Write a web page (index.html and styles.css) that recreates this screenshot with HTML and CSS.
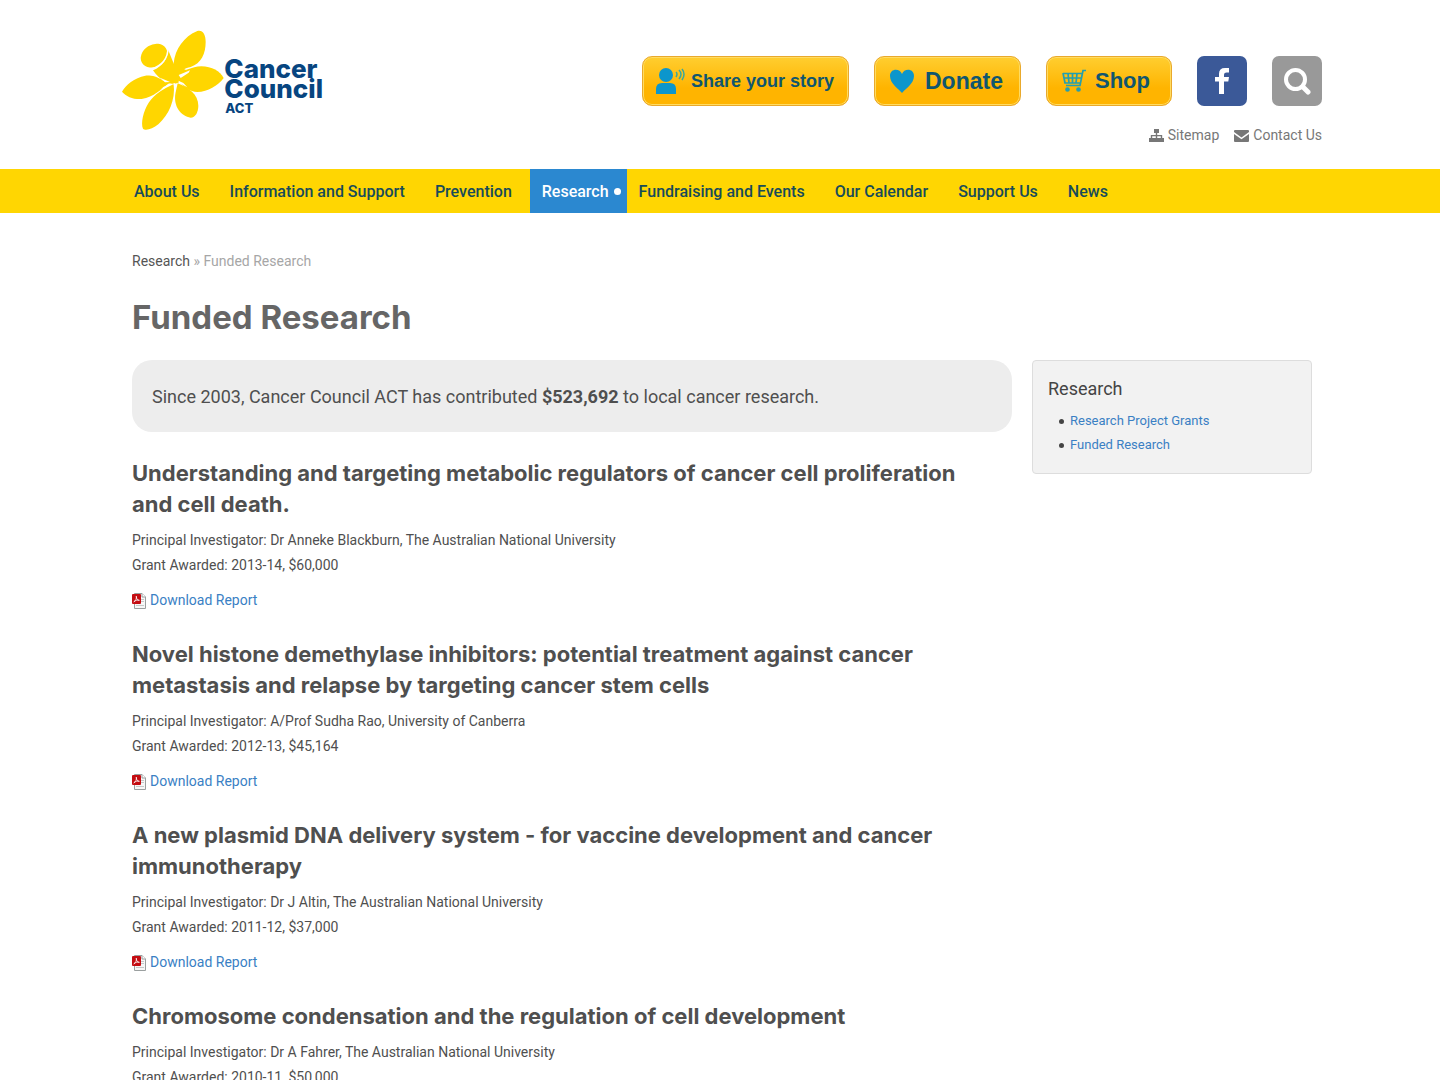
FILE: index.html
```html
<!DOCTYPE html>
<html lang="en">
<head>
<meta charset="utf-8">
<meta name="viewport" content="width=device-width, initial-scale=1">
<title>Funded Research - Cancer Council ACT</title>
<link rel="stylesheet" href="styles.css">
</head>
<body>
<svg width="0" height="0" class="sprite" aria-hidden="true">
  <symbol id="pdf" viewBox="0 0 14 16">
    <path d="M2.500.500h7.500l3.500 3.500v11.500h-11z" fill="#f7f7f7" stroke="#9a9f9f"/>
    <path d="M10 .500v3.500h3.500" fill="#fff" stroke="#9a9f9f"/>
    <path d="M9 6.500h3M9 8.500h3M4 12.500h8" stroke="#c4c8c8"/>
    <rect y="1" width="9" height="10" rx="1" fill="#c40d12"/>
    <path d="M1.800 8.800C3.800 7.800 4.700 5.500 4.300 3.200 4.300 6 5.500 7.300 7.400 7.300 5.500 6.800 3.500 7.300 1.800 8.800z" fill="none" stroke="#fff" stroke-width=".8"/>
  </symbol>
</svg>
<header class="wrap header">
  <a class="logo" href="#" aria-label="Cancer Council ACT">
    <svg width="204" height="102" viewBox="36 30 612 306">
      <g fill="#ffd600">
        <path d="M191 130C195 88 222 49 262 33C278 29 287 43 287 66C287 101 274 130 242 141C225 145 214 150 206 164L188 150Z"/>
        <path d="M205 174C220 150 244 141 274 139C306 139 330 154 341 174C323 198 294 215 262 216C239 215 222 202 206 182Z"/>
        <path d="M203 190C236 203 264 222 265 257C265 276 256 293 242 293C213 288 188 260 197 216Z"/>
        <path d="M191 192C197 240 176 285 145 313C128 326 107 334 99 326C92 311 99 274 117 247C135 220 160 208 191 192Z"/>
        <path d="M178 189C154 207 132 231 95 237C72 239 48 230 36 215C47 194 73 174 106 167C124 166 139 169 160 182Z"/>
        <path d="M129 151C158 138 175 116 173 86L192 133L236 154C223 160 216 172 207 187C193 194 173 193 164 184C151 178 139 165 129 151Z"/>
        <ellipse cx="132" cy="107" rx="42" ry="33" transform="rotate(-32 132 107)"/>
      </g>
      <path d="M121 149C153 139 175 116 174 82" fill="none" stroke="#fff" stroke-width="5"/>
      <path d="M206 165L240 151L236 158L212 174ZM205 182L220 189L232 202L208 189ZM190 190L195 190L197 218ZM184 190L150 211L160 201ZM150 173L166 180L180 186L165 187Z" fill="#fff"/>
      <g class="logo-text">
        <text x="343" y="173">Cancer</text>
        <text x="343" y="235">Council</text>
        <text class="logo-small" x="346" y="280">ACT</text>
      </g>
    </svg>
  </a>
  <div class="tools">
    <div class="buttons">
      <a class="cta share" href="#">
        <svg width="30" height="28" viewBox="0 0 30 28"><g fill="#0c96cc"><circle cx="10" cy="8" r="7"/><path d="M0 27v-5q0-6 6-6h8q6 0 6 6v5z"/></g><path d="M20 5q2 2 0 5M23 3q4 4 0 9M26 2q4 5 0 11" fill="none" stroke="#3ba89c" stroke-width="1.500"/></svg>
        Share your story</a>
      <a class="cta donate" href="#">
        <svg width="26" height="24" viewBox="0 0 26 24"><path d="M13 24C10 20 1 15 1 7C1-1 11-1 13 5C15-1 25-1 25 7C25 15 16 20 13 24z" fill="#0c96cc"/></svg>
        Donate</a>
      <a class="cta shop" href="#">
        <svg width="24" height="24" viewBox="0 0 24 24" fill="none" stroke="#239fb0" stroke-width="1.700"><path d="M24 1.500h-3l-3 15H4M1 4.500h19M1 4l2 10h15.500M2 9h17M6 4.500l1 9.500M10.500 4.500v9.500M15 4.500l-1 9.500"/><g fill="#239fb0"><circle cx="5.500" cy="20.500" r="1.500"/><circle cx="16.500" cy="20.500" r="1.500"/></g></svg>
        Shop</a>
      <a class="square facebook" href="#" aria-label="Facebook"><svg width="16" height="28" viewBox="0 0 16 28"><path d="M15 1v4.500h-2.500q-2.500 0-2.500 2.300V10h5l-.700 4.500H10V27H5V14.500H1V10h4V6.800Q5 1 11 1z" fill="#fff"/></svg></a>
      <button class="square search" type="button" aria-label="Search"><svg width="28" height="28" viewBox="0 0 28 28" fill="none" stroke="#fff" stroke-width="4"><circle cx="12.500" cy="12.500" r="9.500"/><path d="M20 20l5 5" stroke-width="5" stroke-linecap="round"/></svg></button>
    </div>
    <div class="quick">
      <a href="#"><svg width="15" height="13" viewBox="0 0 15 13"><path d="M5 0h5v4H8.200v2H13.200v3H15v4h-5V9h1.800V7.300H8.200V9H10v4H5V9h1.800V7.300H3.200V9H5v4H0V9h1.800V6h5V4H5z" fill="#777"/></svg>Sitemap</a>
      <a href="#"><svg width="15" height="12" viewBox="0 0 15 12"><path d="M1 0h13q1 0 1 1v1L7.500 7.500 0 2V1q0-1 1-1zM0 4l7.500 5.300L15 4v7q0 1-1 1H1q-1 0-1-1z" fill="#777"/></svg>Contact Us</a>
    </div>
  </div>
</header>
<nav class="nav">
  <ul class="wrap">
    <li><a href="#">About Us</a></li>
    <li><a href="#">Information and Support</a></li>
    <li><a href="#">Prevention</a></li>
    <li><a class="active" href="#">Research</a></li>
    <li><a href="#">Fundraising and Events</a></li>
    <li><a href="#">Our Calendar</a></li>
    <li><a href="#">Support Us</a></li>
    <li><a href="#">News</a></li>
  </ul>
</nav>
<div class="wrap page">
  <div class="crumbs"><a href="#">Research</a> » Funded Research</div>
  <h1>Funded Research</h1>
  <div class="columns">
    <main>
      <p class="callout">Since 2003, Cancer Council ACT has contributed <strong>$523,692</strong> to local cancer research.</p>
      <article>
        <h2>Understanding and targeting metabolic regulators of cancer cell proliferation and cell death.</h2>
        <p>Principal Investigator: Dr Anneke Blackburn, The Australian National University<br>Grant Awarded: 2013-14, $60,000</p>
        <a class="report" href="#"><svg width="14" height="16"><use href="#pdf"/></svg>Download Report</a>
      </article>
      <article>
        <h2>Novel histone demethylase inhibitors: potential treatment against cancer metastasis and relapse by targeting cancer stem cells</h2>
        <p>Principal Investigator: A/Prof Sudha Rao, University of Canberra<br>Grant Awarded: 2012-13, $45,164</p>
        <a class="report" href="#"><svg width="14" height="16"><use href="#pdf"/></svg>Download Report</a>
      </article>
      <article>
        <h2>A new plasmid DNA delivery system - for vaccine development and cancer immunotherapy</h2>
        <p>Principal Investigator: Dr J Altin, The Australian National University<br>Grant Awarded: 2011-12, $37,000</p>
        <a class="report" href="#"><svg width="14" height="16"><use href="#pdf"/></svg>Download Report</a>
      </article>
      <article>
        <h2>Chromosome condensation and the regulation of cell development</h2>
        <p>Principal Investigator: Dr A Fahrer, The Australian National University<br>Grant Awarded: 2010-11, $50,000</p>
      </article>
    </main>
    <aside>
      <h3>Research</h3>
      <ul>
        <li><a href="#">Research Project Grants</a></li>
        <li><a href="#">Funded Research</a></li>
      </ul>
    </aside>
  </div>
</div>
</body>
</html>
```
FILE: styles.css
```css
* { box-sizing: border-box; }
body {
  margin: 0;
  background: #fff;
  color: #4f4f4f;
  font: 14px/25px Roboto, sans-serif;
}
a { color: #3a80c4; text-decoration: none; }
h1, h2, h3, p, ul { margin: 0; padding: 0; }
ul { list-style: none; }
svg { display: block; flex: none; }
.sprite { position: absolute; }
.wrap { max-width: 1204px; margin: 0 auto; padding-left: 4px; }

.header { display: flex; justify-content: space-between; padding-top: 30px; padding-bottom: 21px; }
.logo-text { fill: #074580; font: 800 78px Inter, sans-serif; }
.logo-small { font-size: 39px; }
.tools { padding-top: 26px; }
.buttons { display: flex; gap: 25px; }
.cta {
  display: flex;
  align-items: center;
  height: 50px;
  border: 1px solid #e9a92c;
  border-radius: 10px;
  background: linear-gradient(#ffce30, #ffb400 65%);
  box-shadow: inset 0 0 0 1px #ffdc62;
  color: #10566f;
  font: bold 23px "Liberation Sans", Arial, sans-serif;
}
.share { width: 207px; padding-left: 13px; gap: 5px; font-size: 18px; }
.donate { width: 147px; padding-left: 14px; gap: 10px; }
.shop { width: 126px; padding-left: 15px; gap: 9px; font-size: 22px; }
.square {
  display: flex;
  align-items: center;
  justify-content: center;
  width: 50px;
  height: 50px;
  padding: 0;
  border: 0;
  border-radius: 7px;
}
.facebook { background: #3b5998; }
.search { background: #999; }
.quick { display: flex; justify-content: flex-end; gap: 15px; padding-top: 17px; }
.quick a { display: flex; align-items: center; gap: 4px; color: #777; }

.nav { background: #ffd602; font-size: 16px; font-weight: 500; line-height: 42px; }
.nav ul { display: flex; }
.nav a { display: block; position: relative; padding: 2px 18px 0 12px; color: #174b5a; }
.nav .active { background: #2b88d0; color: #fff; }
.nav .active::after {
  content: "";
  position: absolute;
  right: 6px;
  top: 19px;
  width: 7px;
  height: 7px;
  border-radius: 50%;
  background: #fff;
}

.page { padding: 36px 10px 40px 14px; }
.crumbs { color: #a6a6a6; }
.crumbs a { color: #555; }
h1, h2 { font-family: Inter, Arial, sans-serif; }
h1 { margin: 23px 0; color: #666; font-size: 33px; line-height: 40px; }
.columns { display: grid; grid-template-columns: minmax(0, 1fr) 280px; gap: 20px; align-items: start; }
.callout {
  padding: 25px 20px 23px;
  border-radius: 20px;
  background: #ededed;
  font-size: 18px;
  line-height: 24px;
}
article { margin-top: 26px; }
h2 { margin-bottom: 8px; padding-right: 20px; color: #4f4f4f; font-size: 22px; line-height: 31px; }
.report { display: flex; align-items: center; gap: 4px; margin-top: 10px; }
aside {
  padding: 15px 15px 16px;
  border: 1px solid #ddd;
  border-radius: 4px;
  background: #f2f2f2;
}
h3 { margin-bottom: 7px; color: #444; font-size: 18px; font-weight: 400; line-height: 26px; }
aside ul { padding-left: 11px; }
aside li { display: flex; align-items: center; gap: 6px; font-size: 13px; line-height: 24px; }
aside li::before { content: ""; width: 5px; height: 5px; border-radius: 50%; background: #444; }
```
